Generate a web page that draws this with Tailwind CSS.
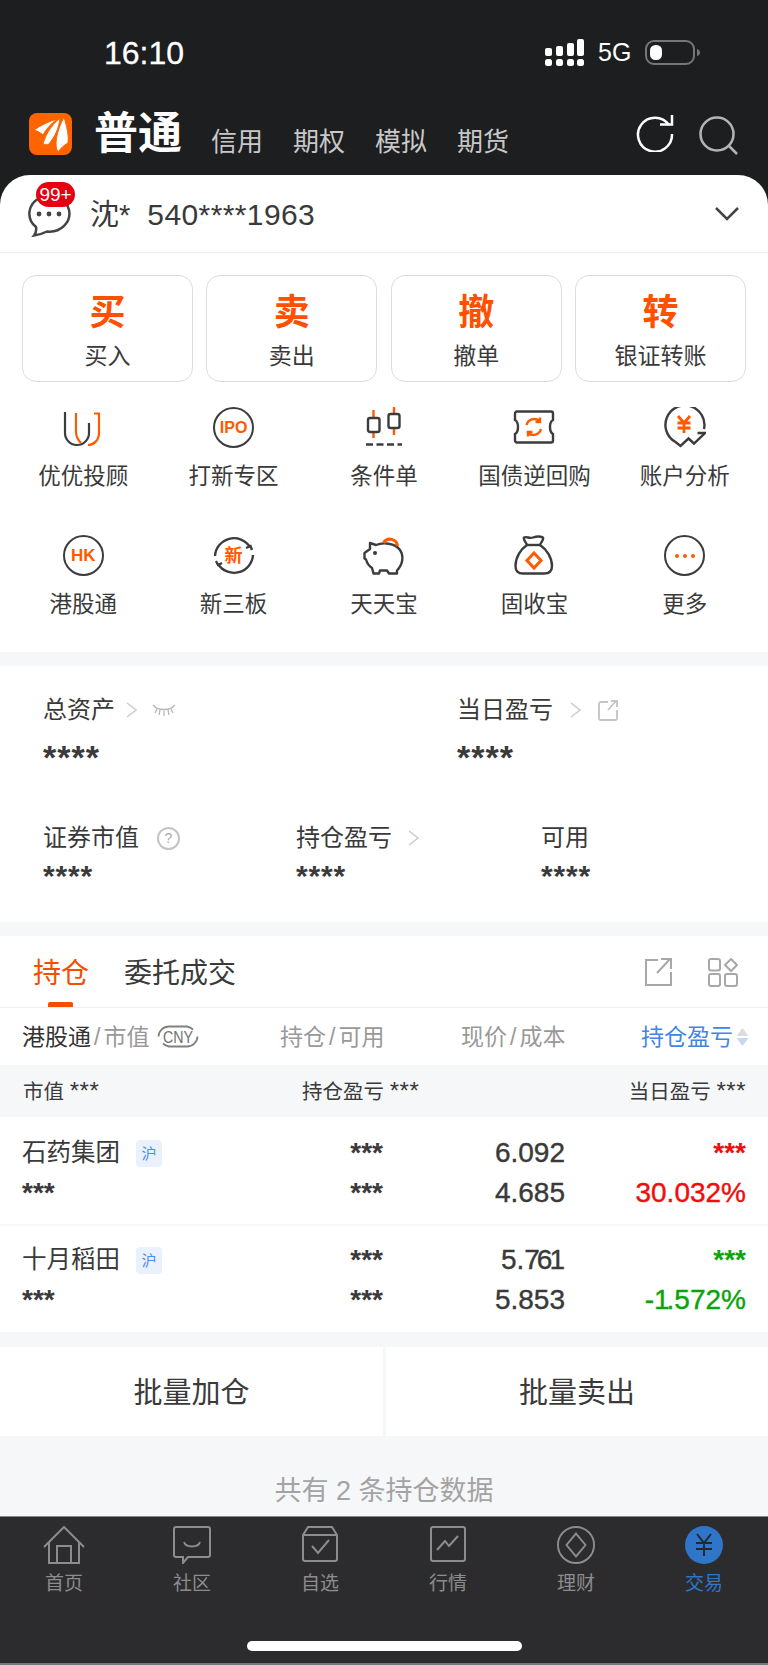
<!DOCTYPE html>
<html lang="zh">
<head>
<meta charset="utf-8">
<title>交易</title>
<script src="https://cdn.jsdelivr.net/npm/@tailwindcss/browser@4"></script>
</head>
<body>
<div class="w-[768px] h-[1665px] overflow-hidden flex flex-col bg-[#1d1e20] text-[#3a3a3a] font-['Liberation_Sans','Noto_Sans_CJK_SC',sans-serif]">

  <!-- status bar -->
  <div class="h-[105px] shrink-0 flex items-center pl-[104px] text-white">
    <span class="text-[32px] leading-none [-webkit-text-stroke:0.3px]">16:10</span>
    <svg class="ml-[361px]" width="40" height="28" viewBox="0 0 40 28" fill="#fff">
      <rect x="0" y="9" width="7" height="8" rx="2"/><rect x="11" y="7" width="7" height="10" rx="2"/><rect x="22" y="4" width="7" height="13" rx="2"/><rect x="32" y="0" width="7" height="17" rx="2"/>
      <rect x="0" y="20" width="7" height="7" rx="2.5"/><rect x="11" y="20" width="7" height="7" rx="2.5"/><rect x="22" y="20" width="7" height="7" rx="2.5"/><rect x="32" y="20" width="7" height="7" rx="2.5"/>
    </svg>
    <span class="ml-[13px] text-[25px] leading-none">5G</span>
    <svg class="ml-[14px]" width="56" height="26" viewBox="0 0 56 26" fill="none">
      <rect x="1" y="1" width="48" height="23" rx="8" stroke="#777" stroke-width="2"/>
      <rect x="5" y="5" width="12" height="15" rx="5.5" fill="#fff"/>
      <path d="M52 9c2 .5 3 2 3 3.500s-1 3-3 3.500z" fill="#777"/>
    </svg>
  </div>

  <!-- account type tabs -->
  <div class="h-[70px] shrink-0 flex items-start pl-[29px] pt-[8px]">
    <div class="w-[43px] h-[42px] rounded-[8px] bg-[#ff6400] shrink-0">
      <svg width="43" height="42" viewBox="0 0 43 42" fill="#fff" stroke="#ff6400" stroke-width="1">
        <path d="M5 17C12 12 21 8 28 6C22 11 17 16 14 22C12 20 8 18 5 17Z"/>
        <path d="M14 32C15 25 21 13 31 5C30 15 26 24 19 32C17 31 16 31 14 32Z"/>
        <path d="M29 39C25 33 27 19 35 4C38 14 40 23 39 30C35 32 32 35 29 39Z"/>
      </svg>
    </div>
    <span class="ml-[22px] text-[44px] leading-[42px] font-bold text-white">普通</span>
    <div class="ml-[29px] mt-[13px] flex gap-[30px] text-[26px] leading-[32px] text-[#c8c8c8]">
      <span>信用</span><span>期权</span><span>模拟</span><span>期货</span>
    </div>
    <svg class="ml-[127px] mt-[1px]" width="38" height="38" viewBox="0 0 38 38" fill="none" stroke="#fff" stroke-width="2.500">
      <path d="M33 11A17 17 0 1 0 36 20"/>
      <path d="M24 10.500H36V1"/>
    </svg>
    <svg class="ml-[25px] mt-[3px]" width="40" height="40" viewBox="0 0 40 40" fill="none" stroke="#b4b4b4" stroke-width="2.500">
      <circle cx="18" cy="18" r="16.500"/>
      <path d="M30 30L38 38"/>
    </svg>
  </div>

  <!-- white sheet -->
  <div class="relative flex-1 flex flex-col rounded-t-[30px] bg-white overflow-hidden">
    <div class="h-[78px] shrink-0 flex items-center pl-[27px] pr-[29px] border-b border-[#eeeeee]">
      <svg class="mt-[4px]" width="44" height="42" viewBox="0 0 44 42" fill="none" stroke="#444" stroke-width="2.500">
        <path d="M9 32A20 18 0 1 1 20 36.500C16 38.500 12 40 7 40.500C9 38 9.500 35 9 32Z"/>
        <circle cx="12" cy="19" r="2.400" fill="#444" stroke="none"/><circle cx="22" cy="19" r="2.400" fill="#444" stroke="none"/><circle cx="32" cy="19" r="2.400" fill="#444" stroke="none"/>
      </svg>
      <span class="ml-[19px] mt-[3px] text-[29px] leading-none">沈*</span>
      <span class="ml-[17px] mt-[3px] text-[30px] tracking-[0.4px] leading-none">540****1963</span>
      <svg class="ml-auto" width="24" height="14" viewBox="0 0 24 14" fill="none" stroke="#444" stroke-width="2.500"><path d="M1 1L12 12L23 1"/></svg>
    </div>
    <span class="absolute left-[36px] top-[7px] w-[39px] h-[25px] rounded-full bg-[#e60012] text-white text-[19px] leading-[25px] text-center">99+</span>

    <!-- trade buttons -->
    <div class="mt-[22px] px-[22px] grid grid-cols-4 gap-[13.500px]">
      <div class="h-[107px] rounded-[14px] border border-[#dcdcdc] flex flex-col items-center pt-[14px]">
        <span class="text-[36px] leading-[46px] font-bold text-[#ff5000]">买</span>
        <span class="mt-[4px] text-[23px] leading-[32px]">买入</span>
      </div>
      <div class="h-[107px] rounded-[14px] border border-[#dcdcdc] flex flex-col items-center pt-[14px]">
        <span class="text-[36px] leading-[46px] font-bold text-[#ff5000]">卖</span>
        <span class="mt-[4px] text-[23px] leading-[32px]">卖出</span>
      </div>
      <div class="h-[107px] rounded-[14px] border border-[#dcdcdc] flex flex-col items-center pt-[14px]">
        <span class="text-[36px] leading-[46px] font-bold text-[#ff5000]">撤</span>
        <span class="mt-[4px] text-[23px] leading-[32px]">撤单</span>
      </div>
      <div class="h-[107px] rounded-[14px] border border-[#dcdcdc] flex flex-col items-center pt-[14px]">
        <span class="text-[36px] leading-[46px] font-bold text-[#ff5000]">转</span>
        <span class="mt-[4px] text-[23px] leading-[32px]">银证转账</span>
      </div>
    </div>

    <!-- function grid -->
    <div class="mt-[25px] pb-[32px] px-[8px] grid grid-cols-5 gap-y-[43px] text-[22.500px] leading-[30px] text-center">
      <div class="flex flex-col items-center gap-[14px]">
        <svg width="42" height="41" viewBox="0 0 42 41" fill="none" stroke-width="2.200" stroke="#3c3c3c">
          <path d="M3 5V26a12 12 0 0 0 24 0V16"/>
          <path d="M14 6V25c0 5 2 8 5 11" stroke="#ff5a00"/>
          <path d="M32 6.500H37V26c0 7-5 12-11 12" stroke="#ff5a00"/>
        </svg>
        <span>优优投顾</span>
      </div>
      <div class="flex flex-col items-center gap-[14px]">
        <div class="w-[41px] h-[41px] rounded-full border-[2.500px] border-[#3c3c3c] flex items-center justify-center text-[#ff5a00] font-bold text-[16px] leading-none">IPO</div>
        <span>打新专区</span>
      </div>
      <div class="flex flex-col items-center gap-[14px]">
        <svg width="42" height="41" viewBox="0 0 42 41" fill="none" stroke-width="2.400">
          <path d="M10.500 3V11M10.500 25V31M31 0V7M31 21V28" stroke="#ff5a00"/>
          <rect x="5" y="11" width="11.500" height="14" rx="2" stroke="#3c3c3c"/>
          <rect x="25.500" y="7" width="11" height="14" rx="2" stroke="#3c3c3c"/>
          <path d="M3 37.500H39" stroke="#3c3c3c" stroke-dasharray="7 3.500"/>
        </svg>
        <span>条件单</span>
      </div>
      <div class="flex flex-col items-center gap-[14px]">
        <svg width="42" height="41" viewBox="0 0 42 41" fill="none" stroke-width="2.400">
          <path d="M4 4.500H38a2 2 0 0 1 2 2V13c-2 1-3 4-3 7s1 6 3 7v6.500a2 2 0 0 1-2 2H4a2 2 0 0 1-2-2V27c2-1 3-4 3-7s-1-6-3-7V6.500a2 2 0 0 1 2-2Z" stroke="#3c3c3c"/>
          <path d="M13.500 18a8 8 0 0 1 13-4M28 22a8 8 0 0 1-13 4" stroke="#ff5a00"/>
          <path d="M27 10.500V15H22.500M15 29.500V25H19.500" stroke="#ff5a00"/>
        </svg>
        <span>国债逆回购</span>
      </div>
      <div class="flex flex-col items-center gap-[14px]">
        <svg width="42" height="41" viewBox="0 0 42 41" fill="none" stroke-width="2.400">
          <path d="M40 22A19.500 19.500 0 1 0 11.500 35L16.500 39L24.500 31.500L30 36.500L41 26H33.500" stroke="#3c3c3c"/>
          <path d="M14 9L20 16L26 9M20 16V26M13.500 16H26.500M13.500 21H26.500" stroke="#ff5a00" stroke-width="2.800"/>
        </svg>
        <span>账户分析</span>
      </div>

      <div class="flex flex-col items-center gap-[14px]">
        <div class="w-[41px] h-[41px] rounded-full border-[2.500px] border-[#3c3c3c] flex items-center justify-center text-[#ff5a00] font-bold text-[17px] leading-none">HK</div>
        <span>港股通</span>
      </div>
      <div class="relative flex flex-col items-center gap-[14px]">
        <div class="w-[41px] h-[41px] flex items-center justify-center text-[#ff5a00] font-bold text-[18px] leading-none">新</div>
        <svg class="absolute left-[55px] top-0" width="42" height="41" viewBox="0 0 42 41" fill="none" stroke="#3c3c3c" stroke-width="2.400">
          <path d="M2 21A19 19 0 0 1 37 12M40 20A19 19 0 0 1 5 29"/>
          <path d="M39 15L37.500 11L33 13M3 26L5 30L9 28"/>
        </svg>
        <span>新三板</span>
      </div>
      <div class="flex flex-col items-center gap-[14px]">
        <svg width="42" height="41" viewBox="0 0 42 41" fill="none" stroke-width="2.400">
          <path d="M7 8L13 10C20 7 32 8 37 15C41 21 40 29 34 35.500V38.500H26L24 35.500H17L16 38.500H10.500L9 33C6 31 4 28 3 24.500L1.500 23.500V18L7 14Z" stroke="#3c3c3c" stroke-linejoin="round"/>
          <circle cx="12" cy="18" r="2" fill="#3c3c3c"/>
          <path d="M20.500 8a7.500 7.500 0 0 1 14 3" stroke="#ff5a00" stroke-width="3"/>
        </svg>
        <span>天天宝</span>
      </div>
      <div class="flex flex-col items-center gap-[14px]">
        <svg width="42" height="41" viewBox="0 0 42 41" fill="none" stroke-width="2.400">
          <path d="M14 10C13 7 10 5 11 2.500C14 1 16 4 20 2.500C24 1 27 1 30 2.500C31 5 28 7 27 10C33 14 39 22 39 31C39 36 36 38.500 31 38.500H10C5 38.500 2.500 36 2.500 31C2.500 22 8 14 14 10Z" stroke="#3c3c3c" stroke-linejoin="round"/>
          <path d="M14 10H27" stroke="#3c3c3c"/>
          <path d="M21 18L28 25.500L21 33L14 25.500Z" stroke="#ff5a00" stroke-width="3"/>
        </svg>
        <span>固收宝</span>
      </div>
      <div class="flex flex-col items-center gap-[14px]">
        <div class="w-[41px] h-[41px] rounded-full border-[2.500px] border-[#3c3c3c] flex items-center justify-center gap-[4px]">
          <i class="w-[4px] h-[4px] rounded-full bg-[#ff5a00]"></i><i class="w-[4px] h-[4px] rounded-full bg-[#ff5a00]"></i><i class="w-[4px] h-[4px] rounded-full bg-[#ff5a00]"></i>
        </div>
        <span>更多</span>
      </div>
    </div>

    <div class="h-[14px] shrink-0 bg-[#f6f7f9]"></div>

    <!-- assets -->
    <div class="h-[256px] shrink-0 pl-[43px] pt-[28px]">
      <div class="flex">
        <div class="w-[414px]">
          <div class="flex items-center text-[24px] leading-[32px]">
            <span>总资产</span>
            <svg class="ml-[11px]" width="11" height="16" viewBox="0 0 11 16" fill="none" stroke="#cccccc" stroke-width="1.500"><path d="M1 1L10 8L1 15"/></svg>
            <svg class="ml-[15px]" width="24" height="13" viewBox="0 0 24 13" fill="none" stroke="#b8b8b8" stroke-width="1.300"><path d="M1 1C6 7 18 7 23 1M5 5L3 9M12 6.500V12M19 5L21 9M8 6L7 11M16 6L17 11"/></svg>
          </div>
          <div class="mt-[13px] text-[34px] leading-[36px] font-bold tracking-[1px]">****</div>
        </div>
        <div>
          <div class="flex items-center text-[24px] leading-[32px]">
            <span>当日盈亏</span>
            <svg class="ml-[17px]" width="11" height="16" viewBox="0 0 11 16" fill="none" stroke="#cccccc" stroke-width="1.500"><path d="M1 1L10 8L1 15"/></svg>
            <svg class="ml-[17px]" width="20" height="21" viewBox="0 0 20 21" fill="none" stroke="#c4c4c4" stroke-width="1.800"><path d="M10 2H3a2 2 0 0 0-2 2V18a2 2 0 0 0 2 2H17a2 2 0 0 0 2-2V10M18 1L10 10M13 1H19V7"/></svg>
          </div>
          <div class="mt-[13px] text-[34px] leading-[36px] font-bold tracking-[1px]">****</div>
        </div>
      </div>
      <div class="mt-[47px] flex">
        <div class="w-[253px]">
          <div class="flex items-center text-[24px] leading-[32px]">
            <span>证券市值</span>
            <span class="ml-[18px] w-[23px] h-[23px] rounded-full border-2 border-[#c4c4c4] flex items-center justify-center text-[14px] leading-none text-[#aaaaaa]">?</span>
          </div>
          <div class="mt-[6px] text-[30px] leading-[32px] font-bold tracking-[0.8px]">****</div>
        </div>
        <div class="w-[245px]">
          <div class="flex items-center text-[24px] leading-[32px]">
            <span>持仓盈亏</span>
            <svg class="ml-[16px]" width="11" height="16" viewBox="0 0 11 16" fill="none" stroke="#cccccc" stroke-width="1.500"><path d="M1 1L10 8L1 15"/></svg>
          </div>
          <div class="mt-[6px] text-[30px] leading-[32px] font-bold tracking-[0.8px]">****</div>
        </div>
        <div>
          <div class="text-[24px] leading-[32px]">可用</div>
          <div class="mt-[6px] text-[30px] leading-[32px] font-bold tracking-[0.8px]">****</div>
        </div>
      </div>
    </div>

    <div class="h-[14px] shrink-0 bg-[#f6f7f9]"></div>

    <!-- holdings tabs -->
    <div class="h-[72px] shrink-0 flex items-start pl-[33px] pr-[30px] border-b border-[#eeeeee]">
      <div class="relative h-[71px] pt-[22px] text-[28px] leading-[32px] text-[#f05000]">
        持仓
        <i class="absolute left-[15px] bottom-0 w-[25px] h-[5px] rounded-t-[2px] bg-[#f05000]"></i>
      </div>
      <span class="ml-[35px] mt-[22px] text-[28px] leading-[32px]">委托成交</span>
      <svg class="ml-auto mt-[22px]" width="28" height="28" viewBox="0 0 28 28" fill="none" stroke="#a8a8a8" stroke-width="2"><path d="M14 2H2V27H27V14M26 1L13 15M17 1H27V11"/></svg>
      <svg class="ml-[36px] mt-[22px]" width="30" height="29" viewBox="0 0 30 29" fill="none" stroke="#a8a8a8" stroke-width="2">
        <rect x="1" y="1" width="11" height="11.500" rx="2"/><rect x="1" y="16" width="11" height="12" rx="2"/><rect x="17" y="16" width="12" height="12" rx="2"/><path d="M23 1L29 7L23 13L17 7Z"/>
      </svg>
    </div>

    <!-- column headers -->
    <div class="h-[57px] shrink-0 flex items-center pl-[22px] text-[23px] leading-[30px] text-[#999999]">
      <div class="w-[258px] flex items-center">
        <span class="text-[#333333]">港股通</span><span class="px-[3px]">/</span><span>市值</span>
        <svg class="ml-[8px]" width="42" height="23" viewBox="0 0 42 23" fill="none">
          <path d="M36 4.500A11 10 0 0 0 30 1.500H12A10.500 10.500 0 0 0 1.500 11.500M6 18.500A11 10 0 0 0 12 21.500H30A10.500 10.500 0 0 0 40.500 11.500" stroke="#808080" stroke-width="1.800"/>
          <text x="21" y="17.500" text-anchor="middle" font-size="17" textLength="30" lengthAdjust="spacingAndGlyphs" fill="#707070">CNY</text>
        </svg>
      </div>
      <div class="w-[181px]">持仓<span class="px-[3px]">/</span>可用</div>
      <div class="w-[180px]">现价<span class="px-[3px]">/</span>成本</div>
      <span class="text-[#3f86e6]">持仓盈亏</span>
      <svg class="ml-[3px]" width="13" height="20" viewBox="0 0 13 20"><path d="M6.500 1L12.500 9H.5Z" fill="#dddddd"/><path d="M6.500 19L12.500 11H.5Z" fill="#c6d9f3"/></svg>
    </div>

    <!-- summary -->
    <div class="h-[52px] shrink-0 bg-[#f6f7f9] grid grid-cols-[279px_1fr_auto] items-center pl-[23px] pr-[22px] pt-[1px] text-[20.500px] leading-[28px]">
      <div>市值 <span class="text-[24px] leading-none tracking-[0.5px]">***</span></div>
      <div>持仓盈亏 <span class="text-[24px] leading-none tracking-[0.5px]">***</span></div>
      <div>当日盈亏 <span class="text-[24px] leading-none tracking-[0.5px]">***</span></div>
    </div>

    <!-- positions -->
    <div class="h-[109px] shrink-0 border-b-2 border-[#f6f7f9] pt-[16px] px-[22px] grid grid-cols-[240px_121px_182px_181px] auto-rows-[40px] items-center text-right">
      <div class="flex items-center text-[24.500px] text-left">石药集团<span class="ml-[16px] w-[26px] h-[27px] rounded-[4px] bg-[#e9f1fc] text-[#4b8de8] text-[15px] leading-[27px] text-center">沪</span></div>
      <span class="text-[28px] leading-[32px] font-bold">***</span>
      <span class="text-[28px] leading-[32px] [-webkit-text-stroke:0.4px]">6.092</span>
      <span class="text-[28px] leading-[32px] font-bold text-[#f00d0d]">***</span>
      <span class="text-[28px] leading-[32px] font-bold text-left">***</span>
      <span class="text-[28px] leading-[32px] font-bold">***</span>
      <span class="text-[28px] leading-[32px] [-webkit-text-stroke:0.4px]">4.685</span>
      <span class="text-[28px] leading-[32px] [-webkit-text-stroke:0.4px] text-[#f00d0d]">30.032%</span>
    </div>
    <div class="h-[106px] shrink-0 pt-[14px] px-[22px] grid grid-cols-[240px_121px_182px_181px] auto-rows-[40px] items-center text-right">
      <div class="flex items-center text-[24.500px] text-left">十月稻田<span class="ml-[16px] w-[26px] h-[27px] rounded-[4px] bg-[#e9f1fc] text-[#4b8de8] text-[15px] leading-[27px] text-center">沪</span></div>
      <span class="text-[28px] leading-[32px] font-bold">***</span>
      <span class="text-[28px] leading-[32px] [-webkit-text-stroke:0.4px]">5.<span class="tracking-[-3px]">76</span>1</span>
      <span class="text-[28px] leading-[32px] font-bold text-[#0aa50a]">***</span>
      <span class="text-[28px] leading-[32px] font-bold text-left">***</span>
      <span class="text-[28px] leading-[32px] font-bold">***</span>
      <span class="text-[28px] leading-[32px] [-webkit-text-stroke:0.4px]">5.853</span>
      <span class="text-[28px] leading-[32px] [-webkit-text-stroke:0.4px] text-[#0aa50a]">-<span class="tracking-[-3px]">1</span>.572%</span>
    </div>

    <!-- batch actions -->
    <div class="flex-1 flex flex-col bg-[#f6f7f9] pt-[15px]">
      <div class="h-[89px] flex gap-[3px] text-[29px]">
        <div class="w-[383px] bg-white flex items-center justify-center pt-[4px]">批量加仓</div>
        <div class="flex-1 bg-white flex items-center justify-center pt-[4px]">批量卖出</div>
      </div>
      <div class="mt-[38px] text-center text-[27px] leading-[34px] text-[#a3a3a3]">共有 2 条持仓数据</div>
    </div>
  </div>

  <!-- bottom nav -->
  <div class="h-[149px] shrink-0 flex flex-col bg-[#2c2c2e] border-t border-[#8a8a8a]">
    <div class="mt-[9px] grid grid-cols-6 text-[19px] leading-[26px] text-[#8c8c8c] text-center">
      <div class="flex flex-col items-center gap-[7px]">
        <svg width="42" height="38" viewBox="0 0 42 38" fill="none" stroke="#8c8c8c" stroke-width="2"><path d="M1 21L21 1L41 21M6 16V37H36V16M14 37V20H28V37"/></svg>
        <span>首页</span>
      </div>
      <div class="flex flex-col items-center gap-[7px]">
        <svg width="38" height="38" viewBox="0 0 38 38" fill="none" stroke="#8c8c8c" stroke-width="2"><path d="M3 1H35a2 2 0 0 1 2 2V29a2 2 0 0 1-2 2H15L10 37V31H3a2 2 0 0 1-2-2V3a2 2 0 0 1 2-2Z"/><path d="M11 16c2 6 14 6 16 0"/></svg>
        <span>社区</span>
      </div>
      <div class="flex flex-col items-center gap-[7px]">
        <svg width="36" height="38" viewBox="0 0 36 38" fill="none" stroke="#8c8c8c" stroke-width="2"><path d="M1 9L6 1H30L35 9V33a2 2 0 0 1-2 2H3a2 2 0 0 1-2-2ZM1 9H35M10 20L16 27L27 14"/></svg>
        <span>自选</span>
      </div>
      <div class="flex flex-col items-center gap-[7px]">
        <svg width="36" height="38" viewBox="0 0 36 38" fill="none" stroke="#8c8c8c" stroke-width="2"><rect x="1" y="1" width="34" height="34" rx="2"/><path d="M7 24L15 15L19 20L28 10"/></svg>
        <span>行情</span>
      </div>
      <div class="flex flex-col items-center gap-[7px]">
        <svg width="42" height="38" viewBox="0 0 42 40" fill="none" stroke="#8c8c8c" stroke-width="2"><circle cx="21" cy="20" r="19"/><path d="M21 8L31 20L21 32L11 20Z"/></svg>
        <span>理财</span>
      </div>
      <div class="flex flex-col items-center gap-[7px] text-[#2f75c8]">
        <svg width="38" height="38" viewBox="0 0 38 38" fill="none"><circle cx="19" cy="19" r="19" fill="#2f75c8"/><path d="M12 8L19 17L26 8M19 17V30M11 17H27M11 23H27" stroke="#26282b" stroke-width="2"/></svg>
        <span>交易</span>
      </div>
    </div>
    <div class="mt-[44px] mx-auto w-[275px] h-[10px] rounded-full bg-white"></div>
    <div class="mt-auto h-[2px] bg-[#777777]"></div>
  </div>
</div>
</body>
</html>
